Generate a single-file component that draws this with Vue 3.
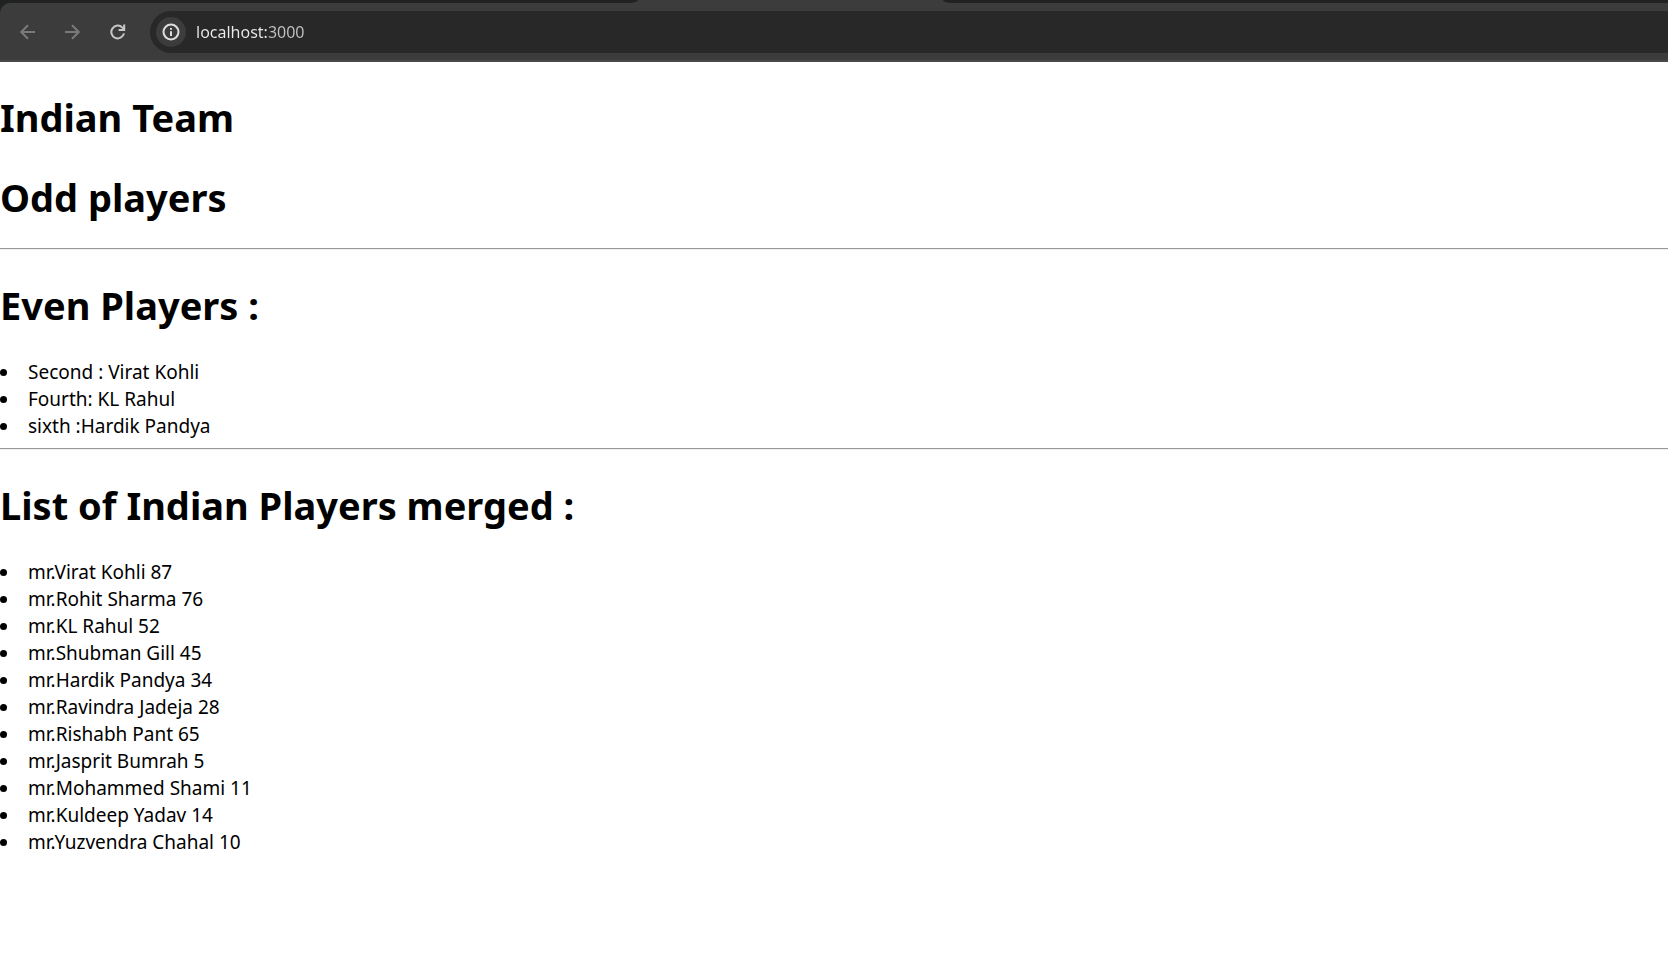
<script setup>
import { ref } from 'vue'

const address = ref('localhost:3000')

const evenPlayers = ['Second : Virat Kohli', 'Fourth: KL Rahul', 'sixth :Hardik Pandya']

const mergedPlayers = [
  { name: 'Virat Kohli', score: 87 },
  { name: 'Rohit Sharma', score: 76 },
  { name: 'KL Rahul', score: 52 },
  { name: 'Shubman Gill', score: 45 },
  { name: 'Hardik Pandya', score: 34 },
  { name: 'Ravindra Jadeja', score: 28 },
  { name: 'Rishabh Pant', score: 65 },
  { name: 'Jasprit Bumrah', score: 5 },
  { name: 'Mohammed Shami', score: 11 },
  { name: 'Kuldeep Yadav', score: 14 },
  { name: 'Yuzvendra Chahal', score: 10 },
]
</script>

<template>
  <div class="browser">
    <header class="chrome">
      <div class="tab-strip">
        <div class="inactive-tabs left"></div>
        <div class="active-tab"></div>
        <div class="inactive-tabs right"></div>
      </div>
      <div class="toolbar">
        <button class="nav" type="button" aria-label="Back" disabled>
          <svg viewBox="0 0 16 16"><path d="M15 8H1.5M8 1.2L1.2 8L8 14.8" /></svg>
        </button>
        <button class="nav" type="button" aria-label="Forward" disabled>
          <svg viewBox="0 0 16 16"><path d="M0 8H13.5M7 1.2L13.8 8L7 14.8" /></svg>
        </button>
        <button class="nav reload" type="button" aria-label="Reload">
          <svg viewBox="0 0 16 16"><path d="M14 9.4A6.4 6.4 0 1 1 12.4 3.6L14 5.4M14.2 0.6V6H8.6" /></svg>
        </button>
        <div class="omnibox">
          <button class="site-info" type="button" aria-label="View site information">
            <svg viewBox="0 0 18 18">
              <circle cx="9" cy="9" r="7.5" />
              <path d="M9 8.2V13M9 5V6.8" />
            </svg>
          </button>
          <input v-model="address" class="address" type="text" aria-label="Address" spellcheck="false" />
        </div>
      </div>
    </header>

    <main class="page">
      <h1>Indian Team</h1>
      <h1>Odd players</h1>
      <hr />
      <h1>Even Players :</h1>
      <ul>
        <li v-for="player in evenPlayers" :key="player">{{ player }}</li>
      </ul>
      <hr />
      <h1>List of Indian Players merged :</h1>
      <ul>
        <li v-for="player in mergedPlayers" :key="player.name">mr.{{ player.name }} {{ player.score }}</li>
      </ul>
    </main>
  </div>
</template>

<style>
body {
  margin: 0;
  background: #fff;
}
</style>

<style scoped>
.browser {
  min-height: 100vh;
  display: flex;
  flex-direction: column;
  overflow: hidden;
  background: #fff;
  color: #000;
  font-family: "Segoe UI", "Noto Sans", "Open Sans", sans-serif;
}

.chrome {
  background: #202221;
}

.tab-strip {
  display: flex;
  height: 3px;
  background: #3c3c3c;
}

.inactive-tabs {
  background: #202221;
}

.inactive-tabs.left {
  flex: 0 1 638px;
  border-bottom-right-radius: 9px 3px;
}

.active-tab {
  flex: 0 1 305px;
}

.inactive-tabs.right {
  flex: 1;
  border-bottom-left-radius: 9px 3px;
}

.toolbar {
  display: flex;
  align-items: center;
  box-sizing: border-box;
  height: 59px;
  padding: 1px 0 0 12px;
  background: #3c3c3c;
  border-bottom: 2px solid #4b4849;
  border-top-left-radius: 10px;
}

.nav {
  display: grid;
  place-items: center;
  width: 32px;
  height: 32px;
  margin-right: 13px;
  padding: 0;
  border: 0;
  border-radius: 50%;
  background: transparent;
  color: #7a7a7a;
}

.nav svg {
  width: 16px;
  height: 16px;
  fill: none;
  stroke: currentColor;
  stroke-width: 2;
}

.nav.reload {
  color: #c7c7c7;
  margin-right: 16px;
}

.omnibox {
  display: flex;
  align-items: center;
  gap: 10px;
  flex: 1;
  box-sizing: border-box;
  height: 42px;
  padding-left: 6px;
  border-radius: 21px 0 0 21px;
  background: #282828;
}

.site-info {
  display: grid;
  place-items: center;
  flex: none;
  width: 30px;
  height: 30px;
  padding: 0;
  border: 0;
  border-radius: 50%;
  background: #3c3c3c;
  color: #dedede;
}

.site-info svg {
  width: 18px;
  height: 18px;
  fill: none;
  stroke: currentColor;
  stroke-width: 2;
}

.address {
  flex: 1;
  min-width: 0;
  height: 30px;
  padding: 0;
  border: 0;
  outline: 0;
  background: linear-gradient(to right, #ececec 72px, #c3c3c3 72px);
  -webkit-background-clip: text;
  background-clip: text;
  color: transparent;
  caret-color: #ececec;
  font-family: inherit;
  font-size: 16px;
}

.page {
  flex: 1;
  display: flow-root;
  font-size: 19px;
  line-height: 27px;
}

h1 {
  margin: 27px 0 26px;
  padding-top: 4px;
  font-size: 38px;
  font-weight: 700;
  line-height: 49px;
}

ul {
  margin: 29px 0 0;
  padding: 0;
  list-style: none;
}

li {
  display: flex;
  align-items: center;
  gap: 21px;
}

li::before {
  content: "";
  width: 7px;
  height: 7px;
  border-radius: 50%;
  background: #000;
}

hr {
  margin: 8px 0;
  border: 0;
  border-top: 1px solid #9a9a9a;
  border-bottom: 1px solid #eeeeee;
}
</style>
